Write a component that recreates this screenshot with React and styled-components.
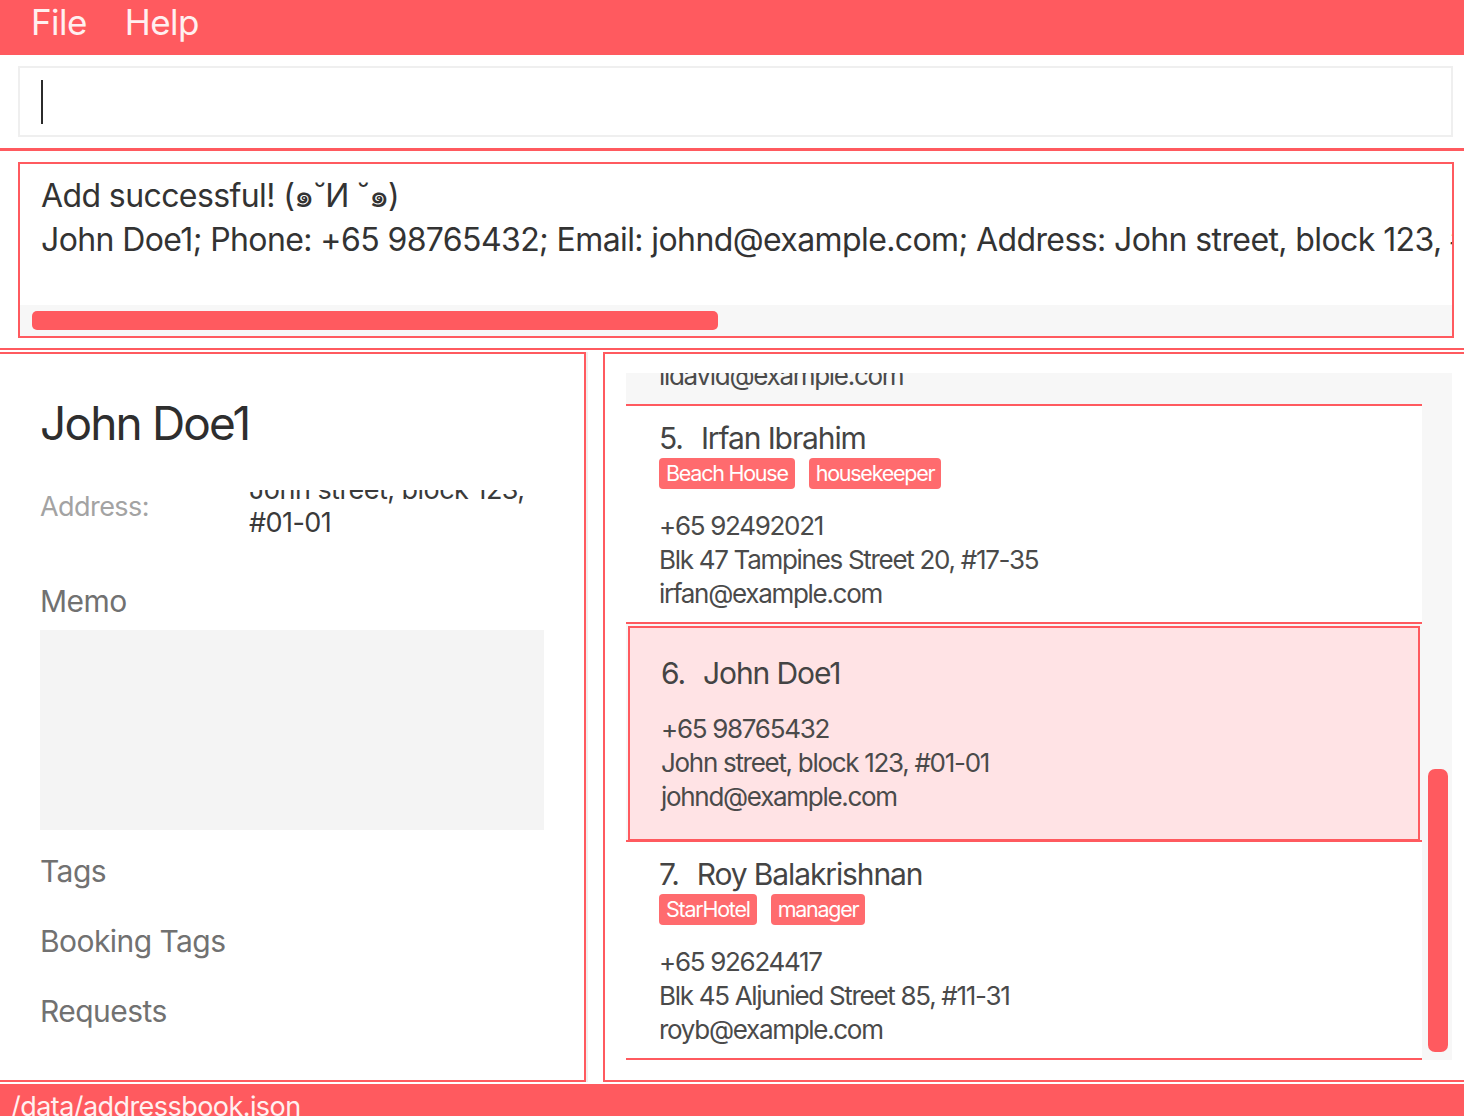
import React from 'react';
import styled, { createGlobalStyle } from 'styled-components';

const RED = '#ff5a5f';
const TAG_RED = '#ff6b6e';

const GlobalStyle = createGlobalStyle`
  html, body {
    margin: 0;
    padding: 0;
    width: 1464px;
    height: 1116px;
    overflow: hidden;
    background: #ffffff;
  }
  body {
    font-family: Inter, "Noto Sans", "DejaVu Sans", sans-serif;
    letter-spacing: -0.56px;
    color: #333333;
  }
  *, *::before, *::after { box-sizing: border-box; }
`;

const Window = styled.div`
  width: 1464px;
  height: 1116px;
  display: flex;
  flex-direction: column;
  overflow: hidden;
`;

const MenuBar = styled.div`
  flex: none;
  height: 55px;
  background: ${RED};
  display: flex;
  align-items: flex-start;
  gap: 38px;
  padding: 1px 0 0 31px;
`;

const MenuItem = styled.span`
  font-size: 35px;
  line-height: 42px;
  color: #fff0f0;
`;

const CommandArea = styled.div`
  flex: none;
  padding: 11px 11px 11px 18px;
`;

const CommandBox = styled.div`
  height: 71px;
  border: 2px solid #efefef;
  display: flex;
  align-items: center;
  padding-left: 21px;
`;

const Caret = styled.div`
  width: 2px;
  height: 44px;
  background: #2b2b2b;
`;

const Rule = styled.div`
  flex: none;
  height: ${(p) => p.$h}px;
  background: ${RED};
  margin-top: ${(p) => p.$top || 0}px;
`;

const ResultArea = styled.div`
  flex: none;
  padding: 11px 10px 0 18px;
`;

const ResultBox = styled.div`
  height: 176px;
  border: 2px solid ${RED};
  display: flex;
  flex-direction: column;
  overflow: hidden;
`;

const ResultText = styled.div`
  flex: 1;
  padding: 10px 0 0 21px;
  font-size: 32px;
  line-height: 44px;
  letter-spacing: -0.6px;
  white-space: nowrap;
  overflow: hidden;
  color: #333333;
`;

const HTrack = styled.div`
  flex: none;
  height: 31px;
  background: #f7f7f7;
  padding: 6px 12px;
`;

const HThumb = styled.div`
  width: 686px;
  height: 19px;
  border-radius: 5px;
  background: ${RED};
`;

const Panels = styled.div`
  flex: none;
  height: 730px;
  margin-top: 2px;
  display: flex;
`;

const LeftPanel = styled.section`
  flex: 0 0 586px;
  border: 2px solid ${RED};
  border-left: none;
  padding: 40px 0 0 40px;
  display: flex;
  flex-direction: column;
`;

const SplitGap = styled.div`
  flex: 0 0 2px;
  background: #f0f0f0;
  margin-right: 15px;
`;

const RightPanel = styled.section`
  flex: 1;
  border: 2px solid ${RED};
  border-right: none;
  padding: 19px 12px 20px 21px;
`;

const DetailName = styled.h1`
  margin: 0;
  font-size: 46px;
  line-height: 58px;
  font-weight: 400;
  letter-spacing: -0.04em;
  color: #2e2e2e;
`;

const FieldRow = styled.div`
  display: flex;
  margin-top: 38px;
`;

const FieldLabel = styled.div`
  flex: 0 0 209px;
  font-size: 27px;
  line-height: 33px;
  color: #a3a3a3;
`;

const FieldValue = styled.div`
  width: 295px;
  height: 49px;
  overflow: hidden;
  display: flex;
  flex-direction: column;
  justify-content: flex-end;
  font-size: 27px;
  line-height: 33px;
  letter-spacing: -0.54px;
  color: #3a3a3a;
`;

const SectionLabel = styled.div`
  font-size: 30px;
  line-height: 36px;
  color: #717171;
  margin-top: ${(p) => p.$top}px;
`;

const MemoBox = styled.div`
  width: 504px;
  height: 200px;
  margin-top: 11px;
  background: #f4f4f4;
`;

const ListArea = styled.div`
  height: 687px;
  display: flex;
  background: #f7f7f7;
`;

const ListViewport = styled.div`
  flex: 1;
  overflow: hidden;
`;

const ListStack = styled.div`
  margin-top: -185px;
  display: flex;
  flex-direction: column;
`;

const Cell = styled.div`
  height: 218px;
  flex: none;
  border-bottom: 2px solid ${RED};
  background: ${(p) => (p.$shaded ? '#f7f7f7' : '#ffffff')};
  display: flex;
  align-items: center;
  padding: ${(p) => (p.$selected ? '2px 2px 0 2px' : '2px 0 0 33px')};
`;

const SelectedBox = styled.div`
  align-self: stretch;
  flex: 1;
  border: 2px solid ${RED};
  border-bottom-width: 1px;
  background: #ffe3e5;
  display: flex;
  align-items: center;
  padding-left: 31px;
`;

const Card = styled.div`
  display: flex;
  flex-direction: column;
`;

const TitleRow = styled.div`
  display: flex;
  gap: 18px;
  font-size: 30px;
  line-height: 38px;
  letter-spacing: -0.037em;
  color: #444444;
`;

const TagRow = styled.div`
  display: flex;
  gap: 14px;
  margin-top: 1px;
`;

const Tag = styled.span`
  height: 31px;
  padding: 0 7px;
  border-radius: 4px;
  background: ${TAG_RED};
  color: #ffffff;
  font-size: 21.5px;
  line-height: 31px;
  letter-spacing: -0.058em;
`;

const Details = styled.div`
  margin-top: 20px;
  font-size: 26px;
  line-height: 34px;
  letter-spacing: -0.05em;
  color: #4a4a4a;
  white-space: nowrap;
`;

const VTrack = styled.div`
  flex: 0 0 30px;
  padding: 396px 4px 0 6px;
`;

const VThumb = styled.div`
  width: 20px;
  height: 283px;
  border-radius: 7px;
  background: ${RED};
`;

const StatusBar = styled.footer`
  flex: 1;
  margin-top: 2px;
  background: ${RED};
  padding: 6px 0 0 11px;
  font-size: 27px;
  line-height: 33px;
  color: #fff0f0;
  overflow: hidden;
  white-space: nowrap;
`;

const persons = [
  {
    id: 4,
    name: 'David Li',
    tags: ['friends'],
    phone: '+65 91031282',
    address: 'Blk 436 Serangoon Gardens Street 26, #16-43',
    email: 'lidavid@example.com',
  },
  {
    id: 5,
    name: 'Irfan Ibrahim',
    tags: ['Beach House', 'housekeeper'],
    phone: '+65 92492021',
    address: 'Blk 47 Tampines Street 20, #17-35',
    email: 'irfan@example.com',
  },
  {
    id: 6,
    name: 'John Doe1',
    tags: [],
    phone: '+65 98765432',
    address: 'John street, block 123, #01-01',
    email: 'johnd@example.com',
    selected: true,
  },
  {
    id: 7,
    name: 'Roy Balakrishnan',
    tags: ['StarHotel', 'manager'],
    phone: '+65 92624417',
    address: 'Blk 45 Aljunied Street 85, #11-31',
    email: 'royb@example.com',
  },
];

function PersonCard({ person }) {
  return (
    <Card>
      <TitleRow>
        <span>{person.id}.</span>
        <span>{person.name}</span>
      </TitleRow>
      {person.tags.length > 0 && (
        <TagRow>
          {person.tags.map((t) => (
            <Tag key={t}>{t}</Tag>
          ))}
        </TagRow>
      )}
      <Details>
        <div>{person.phone}</div>
        <div>{person.address}</div>
        <div>{person.email}</div>
      </Details>
    </Card>
  );
}

export default function App() {
  return (
    <>
      <GlobalStyle />
      <Window>
        <MenuBar>
          <MenuItem>File</MenuItem>
          <MenuItem>Help</MenuItem>
        </MenuBar>
        <CommandArea>
          <CommandBox>
            <Caret />
          </CommandBox>
        </CommandArea>
        <Rule $h={3} />
        <ResultArea>
          <ResultBox>
            <ResultText>
              <div>Add successful! (๑˘И ˘๑)</div>
              <div>
                John Doe1; Phone: +65 98765432; Email: johnd@example.com; Address: John street, block 123, #01-01; Tags:
              </div>
            </ResultText>
            <HTrack>
              <HThumb />
            </HTrack>
          </ResultBox>
        </ResultArea>
        <Rule $h={2} $top={10} />
        <Panels>
          <LeftPanel>
            <DetailName>John Doe1</DetailName>
            <FieldRow>
              <FieldLabel>Address:</FieldLabel>
              <FieldValue>
                <div>John street, block 123,</div>
                <div>#01-01</div>
              </FieldValue>
            </FieldRow>
            <SectionLabel $top={44}>Memo</SectionLabel>
            <MemoBox />
            <SectionLabel $top={23}>Tags</SectionLabel>
            <SectionLabel $top={34}>Booking Tags</SectionLabel>
            <SectionLabel $top={34}>Requests</SectionLabel>
          </LeftPanel>
          <SplitGap />
          <RightPanel>
            <ListArea>
              <ListViewport>
                <ListStack>
                  {persons.map((p) => (
                    <Cell key={p.id} $shaded={p.id % 2 === 0} $selected={p.selected}>
                      {p.selected ? (
                        <SelectedBox>
                          <PersonCard person={p} />
                        </SelectedBox>
                      ) : (
                        <PersonCard person={p} />
                      )}
                    </Cell>
                  ))}
                </ListStack>
              </ListViewport>
              <VTrack>
                <VThumb />
              </VTrack>
            </ListArea>
          </RightPanel>
        </Panels>
        <StatusBar>/data/addressbook.json</StatusBar>
      </Window>
    </>
  );
}
